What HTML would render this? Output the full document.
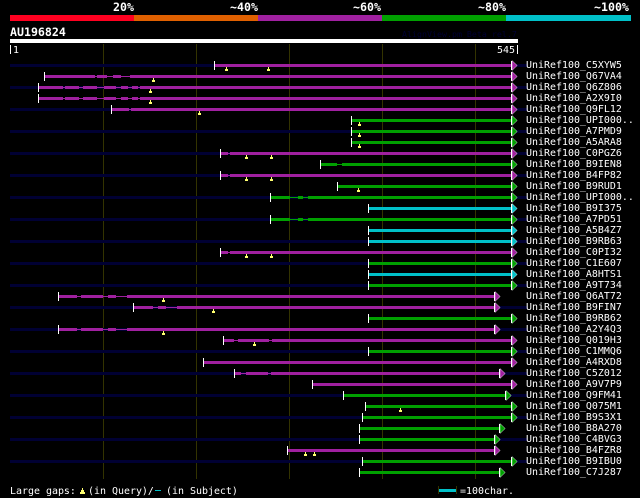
<!DOCTYPE html>
<html><head><meta charset="utf-8"><style>
html,body{margin:0;padding:0;background:#000;width:640px;height:498px;overflow:hidden}
svg{display:block}
text{font-family:"DejaVu Sans Mono","Liberation Mono",monospace;fill:#fff;font-size:9.96px}
.h{font-size:11.6px;font-weight:bold}
.p{fill:#a020a0}.g{fill:#00a000}.c{fill:#00c0c8}
</style></head><body>
<svg width="640" height="498" viewBox="0 0 640 498" shape-rendering="crispEdges">
<defs>
<rect id="t" y="-3" width="1" height="9" fill="#fff"/>
<g id="a"><path d="M1-3.5V6.5L6.2 1.5Z" stroke="#fff" stroke-width=".45" shape-rendering="auto"/><rect y="-3" width="1" height="9" fill="#fff"/></g>
<path id="m" d="M1 3h1v2h1v2H0V5h1z" fill="#ffff70"/>
<rect id="n" x="10" width="517" height="3" fill="#000033"/>
</defs>
<rect x="10" y="15" width="124" height="6" fill="#ff0020"/>
<rect x="134" y="15" width="124" height="6" fill="#e06000"/>
<rect x="258" y="15" width="124" height="6" fill="#a020a0"/>
<rect x="382" y="15" width="124" height="6" fill="#00a000"/>
<rect x="506" y="15" width="125" height="6" fill="#00c0c8"/>
<text class="h" x="113" y="11">20%</text>
<text class="h" x="230" y="11">~40%</text>
<text class="h" x="353" y="11">~60%</text>
<text class="h" x="478" y="11">~80%</text>
<text class="h" x="594" y="11">~100%</text>
<text class="h" x="10" y="36">AU196824</text>
<text x="402" y="37" style="font-size:8.3px;fill:#000033">AlignView.pm Beta rel.7</text>
<rect x="10" y="39" width="508" height="4" fill="#fff"/>
<rect x="10" y="45" width="1" height="9" fill="#fff"/>
<rect x="517" y="45" width="1" height="9" fill="#fff"/>
<text x="13" y="53">1</text>
<text x="497" y="53">545</text>
<g fill="#333300">
<rect x="103" y="44" width="1" height="435"/>
<rect x="196" y="44" width="1" height="435"/>
<rect x="289" y="44" width="1" height="435"/>
<rect x="382" y="44" width="1" height="435"/>
<rect x="475" y="44" width="1" height="435"/>
</g>

<g transform="translate(0,64)"><use href="#n"/><path class="p" d="M215 0h296v3H215z"/><use href="#t" x="214"/><use href="#m" x="225"/><use href="#m" x="267"/><use href="#a" x="511" class="p"/><text x="526" y="4">UniRef100_C5XYW5</text></g>
<g transform="translate(0,75)"><path class="p" d="M45 1h466v1H45zM45 0h50v3H45zM97 0h10v3H97zM113 0h8v3h-8zM130 0h381v3H130z"/><use href="#t" x="44"/><use href="#m" x="152"/><use href="#a" x="511" class="p"/><text x="526" y="4">UniRef100_Q67VA4</text></g>
<g transform="translate(0,86)"><use href="#n"/><path class="p" d="M39 1h472v1H39zM39 0h24v3H39zM65 0h14v3H65zM83 0h14v3H83zM104 0h12v3h-12zM121 0h7v3h-7zM132 0h6v3h-6zM140 0h371v3H140z"/><use href="#t" x="38"/><use href="#m" x="149"/><use href="#a" x="511" class="p"/><text x="526" y="4">UniRef100_Q6Z806</text></g>
<g transform="translate(0,97)"><path class="p" d="M39 1h472v1H39zM39 0h24v3H39zM65 0h14v3H65zM83 0h14v3H83zM104 0h12v3h-12zM121 0h7v3h-7zM132 0h6v3h-6zM140 0h371v3H140z"/><use href="#t" x="38"/><use href="#m" x="149"/><use href="#a" x="511" class="p"/><text x="526" y="4">UniRef100_A2X9I0</text></g>
<g transform="translate(0,108)"><use href="#n"/><path class="p" d="M112 1h399v1H112zM112 0h17v3h-17zM131 0h380v3H131z"/><use href="#t" x="111"/><use href="#m" x="198"/><use href="#a" x="511" class="p"/><text x="526" y="4">UniRef100_Q9FL12</text></g>
<g transform="translate(0,119)"><path class="g" d="M352 0h159v3H352z"/><use href="#t" x="351"/><use href="#m" x="358"/><use href="#a" x="511" class="g"/><text x="526" y="4">UniRef100_UPI000..</text></g>
<g transform="translate(0,130)"><use href="#n"/><path class="g" d="M352 0h159v3H352z"/><use href="#t" x="351"/><use href="#m" x="358"/><use href="#a" x="511" class="g"/><text x="526" y="4">UniRef100_A7PMD9</text></g>
<g transform="translate(0,141)"><path class="g" d="M352 0h159v3H352z"/><use href="#t" x="351"/><use href="#m" x="358"/><use href="#a" x="511" class="g"/><text x="526" y="4">UniRef100_A5ARA8</text></g>
<g transform="translate(0,152)"><use href="#n"/><path class="p" d="M221 1h290v1H221zM221 0h7v3h-7zM230 0h281v3H230z"/><use href="#t" x="220"/><use href="#m" x="245"/><use href="#m" x="270"/><use href="#a" x="511" class="p"/><text x="526" y="4">UniRef100_C0PGZ6</text></g>
<g transform="translate(0,163)"><path class="g" d="M321 1h190v1H321zM321 0h16v3h-16zM342 0h169v3H342z"/><use href="#t" x="320"/><use href="#a" x="511" class="g"/><text x="526" y="4">UniRef100_B9IEN8</text></g>
<g transform="translate(0,174)"><use href="#n"/><path class="p" d="M221 1h290v1H221zM221 0h7v3h-7zM230 0h281v3H230z"/><use href="#t" x="220"/><use href="#m" x="245"/><use href="#m" x="270"/><use href="#a" x="511" class="p"/><text x="526" y="4">UniRef100_B4FP82</text></g>
<g transform="translate(0,185)"><path class="g" d="M338 0h173v3H338z"/><use href="#t" x="337"/><use href="#m" x="357"/><use href="#a" x="511" class="g"/><text x="526" y="4">UniRef100_B9RUD1</text></g>
<g transform="translate(0,196)"><use href="#n"/><path class="g" d="M271 1h240v1H271zM271 0h19v3h-19zM298 0h5v3h-5zM308 0h203v3H308z"/><use href="#t" x="270"/><use href="#a" x="511" class="g"/><text x="526" y="4">UniRef100_UPI000..</text></g>
<g transform="translate(0,207)"><path class="c" d="M369 0h142v3H369z"/><use href="#t" x="368"/><use href="#a" x="511" class="c"/><text x="526" y="4">UniRef100_B9I375</text></g>
<g transform="translate(0,218)"><use href="#n"/><path class="g" d="M271 1h240v1H271zM271 0h19v3h-19zM298 0h5v3h-5zM308 0h203v3H308z"/><use href="#t" x="270"/><use href="#a" x="511" class="g"/><text x="526" y="4">UniRef100_A7PD51</text></g>
<g transform="translate(0,229)"><path class="c" d="M369 0h142v3H369z"/><use href="#t" x="368"/><use href="#a" x="511" class="c"/><text x="526" y="4">UniRef100_A5B4Z7</text></g>
<g transform="translate(0,240)"><use href="#n"/><path class="c" d="M369 0h142v3H369z"/><use href="#t" x="368"/><use href="#a" x="511" class="c"/><text x="526" y="4">UniRef100_B9RB63</text></g>
<g transform="translate(0,251)"><path class="p" d="M221 1h290v1H221zM221 0h7v3h-7zM230 0h281v3H230z"/><use href="#t" x="220"/><use href="#m" x="245"/><use href="#m" x="270"/><use href="#a" x="511" class="p"/><text x="526" y="4">UniRef100_C0PI32</text></g>
<g transform="translate(0,262)"><use href="#n"/><path class="g" d="M369 0h142v3H369z"/><use href="#t" x="368"/><use href="#a" x="511" class="g"/><text x="526" y="4">UniRef100_C1E607</text></g>
<g transform="translate(0,273)"><path class="c" d="M369 0h142v3H369z"/><use href="#t" x="368"/><use href="#a" x="511" class="c"/><text x="526" y="4">UniRef100_A8HTS1</text></g>
<g transform="translate(0,284)"><use href="#n"/><path class="g" d="M369 0h142v3H369z"/><use href="#t" x="368"/><use href="#a" x="511" class="g"/><text x="526" y="4">UniRef100_A9T734</text></g>
<g transform="translate(0,295)"><path class="p" d="M59 1h435v1H59zM59 0h18v3H59zM81 0h22v3H81zM108 0h8v3h-8zM127 0h367v3H127z"/><use href="#t" x="58"/><use href="#m" x="162"/><use href="#a" x="494" class="p"/><text x="526" y="4">UniRef100_Q6AT72</text></g>
<g transform="translate(0,306)"><use href="#n"/><path class="p" d="M134 1h360v1H134zM134 0h19v3h-19zM158 0h8v3h-8zM177 0h317v3H177z"/><use href="#t" x="133"/><use href="#m" x="212"/><use href="#a" x="494" class="p"/><text x="526" y="4">UniRef100_B9FIN7</text></g>
<g transform="translate(0,317)"><path class="g" d="M369 0h142v3H369z"/><use href="#t" x="368"/><use href="#a" x="511" class="g"/><text x="526" y="4">UniRef100_B9RB62</text></g>
<g transform="translate(0,328)"><use href="#n"/><path class="p" d="M59 1h435v1H59zM59 0h18v3H59zM81 0h22v3H81zM108 0h8v3h-8zM127 0h367v3H127z"/><use href="#t" x="58"/><use href="#m" x="162"/><use href="#a" x="494" class="p"/><text x="526" y="4">UniRef100_A2Y4Q3</text></g>
<g transform="translate(0,339)"><path class="p" d="M224 1h287v1H224zM224 0h10v3h-10zM238 0h31v3h-31zM272 0h239v3H272z"/><use href="#t" x="223"/><use href="#m" x="253"/><use href="#a" x="511" class="p"/><text x="526" y="4">UniRef100_Q019H3</text></g>
<g transform="translate(0,350)"><use href="#n"/><path class="g" d="M369 0h142v3H369z"/><use href="#t" x="368"/><use href="#a" x="511" class="g"/><text x="526" y="4">UniRef100_C1MMQ6</text></g>
<g transform="translate(0,361)"><path class="p" d="M204 0h307v3H204z"/><use href="#t" x="203"/><use href="#a" x="511" class="p"/><text x="526" y="4">UniRef100_A4RXD8</text></g>
<g transform="translate(0,372)"><use href="#n"/><path class="p" d="M235 1h264v1H235zM235 0h6v3h-6zM246 0h22v3h-22zM271 0h228v3H271z"/><use href="#t" x="234"/><use href="#a" x="499" class="p"/><text x="526" y="4">UniRef100_C5Z012</text></g>
<g transform="translate(0,383)"><path class="p" d="M313 0h198v3H313z"/><use href="#t" x="312"/><use href="#a" x="511" class="p"/><text x="526" y="4">UniRef100_A9V7P9</text></g>
<g transform="translate(0,394)"><use href="#n"/><path class="g" d="M344 0h161v3H344z"/><use href="#t" x="343"/><use href="#a" x="505" class="g"/><text x="526" y="4">UniRef100_Q9FM41</text></g>
<g transform="translate(0,405)"><path class="g" d="M366 0h145v3H366z"/><use href="#t" x="365"/><use href="#m" x="399"/><use href="#a" x="511" class="g"/><text x="526" y="4">UniRef100_Q075M1</text></g>
<g transform="translate(0,416)"><use href="#n"/><path class="g" d="M363 0h148v3H363z"/><use href="#t" x="362"/><use href="#a" x="511" class="g"/><text x="526" y="4">UniRef100_B9S3X1</text></g>
<g transform="translate(0,427)"><path class="g" d="M360 0h139v3H360z"/><use href="#t" x="359"/><use href="#a" x="499" class="g"/><text x="526" y="4">UniRef100_B8A270</text></g>
<g transform="translate(0,438)"><use href="#n"/><path class="g" d="M360 0h134v3H360z"/><use href="#t" x="359"/><use href="#a" x="494" class="g"/><text x="526" y="4">UniRef100_C4BVG3</text></g>
<g transform="translate(0,449)"><path class="p" d="M288 0h206v3H288z"/><use href="#t" x="287"/><use href="#m" x="304"/><use href="#m" x="313"/><use href="#a" x="494" class="p"/><text x="526" y="4">UniRef100_B4FZR8</text></g>
<g transform="translate(0,460)"><use href="#n"/><path class="g" d="M363 0h148v3H363z"/><use href="#t" x="362"/><use href="#a" x="511" class="g"/><text x="526" y="4">UniRef100_B9IBU0</text></g>
<g transform="translate(0,471)"><path class="g" d="M360 0h139v3H360z"/><use href="#t" x="359"/><use href="#a" x="499" class="g"/><text x="526" y="4">UniRef100_C7J287</text></g>

<text x="10" y="494">Large gaps:</text>
<path d="M82 488h1v2h1v2h1v2h-5v-2h1v-2h1z" fill="#ffff70"/>
<text x="88" y="494">(in Query)/</text>
<rect x="155" y="490" width="6" height="1" fill="#00c0c8"/>
<text x="166" y="494">(in Subject)</text>
<rect x="438" y="486" width="1" height="8" fill="#333300"/>
<rect x="456" y="486" width="1" height="8" fill="#333300"/>
<rect x="439" y="489" width="17" height="3" fill="#00c0c8"/>
<text x="460" y="494">=100char.</text>
</svg>
</body></html>
